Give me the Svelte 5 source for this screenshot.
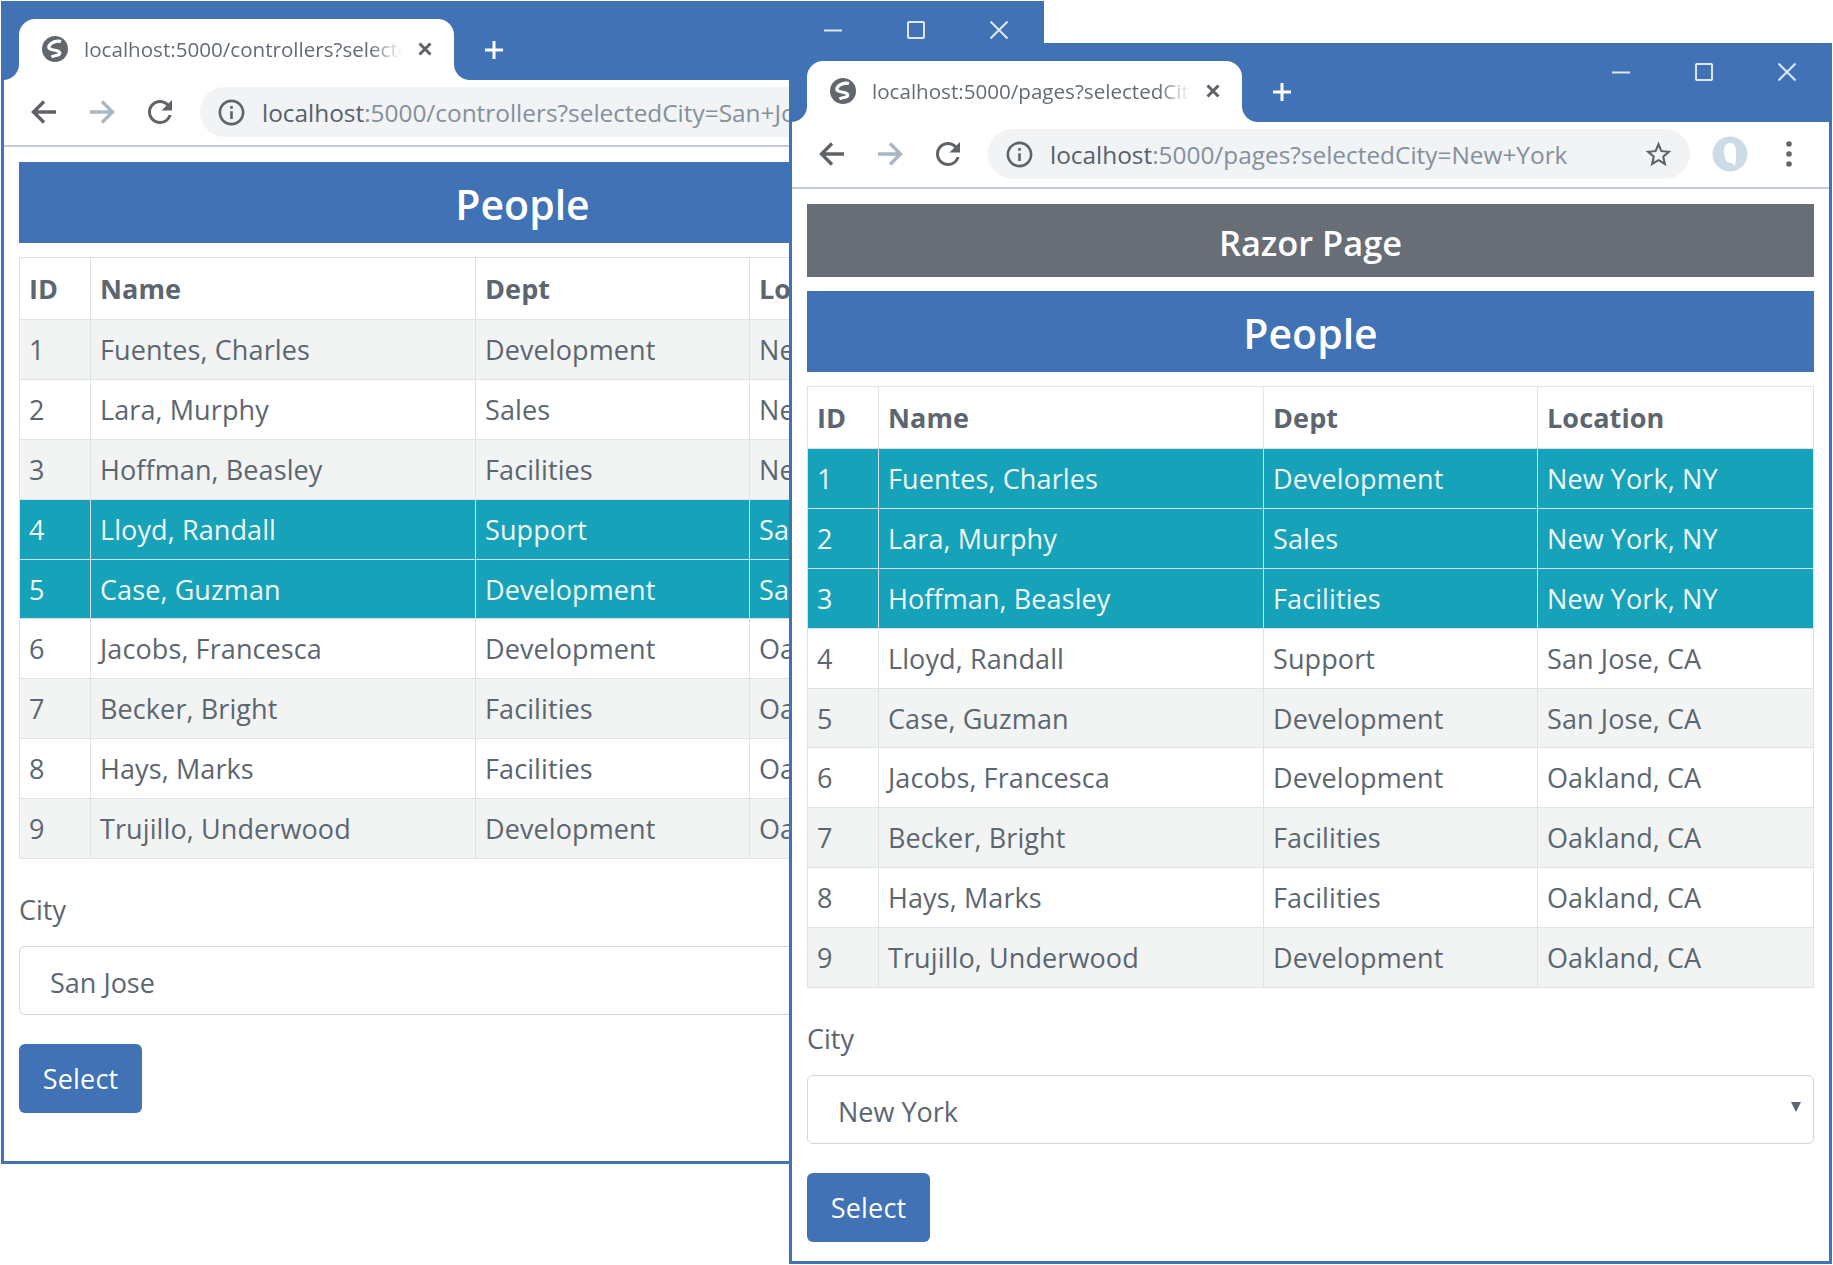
<script>
  const people = [
    [1, 'Fuentes, Charles', 'Development', 'New York, NY'],
    [2, 'Lara, Murphy', 'Sales', 'New York, NY'],
    [3, 'Hoffman, Beasley', 'Facilities', 'New York, NY'],
    [4, 'Lloyd, Randall', 'Support', 'San Jose, CA'],
    [5, 'Case, Guzman', 'Development', 'San Jose, CA'],
    [6, 'Jacobs, Francesca', 'Development', 'Oakland, CA'],
    [7, 'Becker, Bright', 'Facilities', 'Oakland, CA'],
    [8, 'Hays, Marks', 'Facilities', 'Oakland, CA'],
    [9, 'Trujillo, Underwood', 'Development', 'Oakland, CA']
  ];
  const windows = [
    { cls: 'win-a', path: 'controllers', city: 'San+Jose', label: 'San Jose', match: 'San Jose', banner: null },
    { cls: 'win-b', path: 'pages', city: 'New+York', label: 'New York', match: 'New York', banner: 'Razor Page' }
  ];
</script>

<div class="desktop">
  {#each windows as w}
    <section class="window {w.cls}">
      <header class="titlebar">
        <div class="tab">
          <svg class="globe" viewBox="0 0 26 26">
            <circle cx="13" cy="13" r="13" fill="#62676e" />
            <path d="M19 5.500C15 4.500 9 6 7 10c-1 3 3 4 7 4.500 3 .5 4.500 2 3.500 3.500-1 2-5 1-8 3" fill="none" stroke="#fff" stroke-width="3.200" />
          </svg>
          <span class="tab-title">localhost:5000/{w.path}?selectedCity={w.city}</span>
          <svg class="tab-close" viewBox="0 0 14 14"><path d="M1.500 1.500l11 11M12.500 1.500l-11 11" /></svg>
        </div>
        <svg class="newtab" viewBox="0 0 20 20"><path d="M10 1v18M1 10h18" /></svg>
        <div class="controls">
          <svg viewBox="0 0 18 18"><path d="M0 9.500h18" /></svg>
          <svg viewBox="0 0 18 18"><rect x="1" y="1" width="16" height="16" rx="1" /></svg>
          <svg viewBox="0 0 18 18"><path d="M0.500 0.500l17 17M17.500 0.500l-17 17" /></svg>
        </div>
      </header>

      <nav class="toolbar">
        <svg class="nav" viewBox="0 0 26 26"><path d="M25 13H3M13 2.500L2.500 13 13 23.500" /></svg>
        <svg class="nav fwd" viewBox="0 0 26 26"><path d="M1 13h22M13 2.500L23.500 13 13 23.500" /></svg>
        <svg class="reload" viewBox="0 0 24 24"><path d="M17.65 6.35A7.958 7.958 0 0 0 12 4c-4.42 0-7.99 3.58-7.99 8s3.57 8 7.99 8c3.73 0 6.84-2.55 7.73-6h-2.08A5.99 5.99 0 0 1 12 18c-3.31 0-6-2.69-6-6s2.69-6 6-6c1.66 0 3.14.69 4.22 1.78L13 11h7V4l-2.35 2.35z" /></svg>
        <div class="omnibox">
          <svg class="info" viewBox="0 0 24 24"><path d="M11 7h2v2h-2zm0 4h2v6h-2zm1-9C6.48 2 2 6.48 2 12s4.48 10 10 10 10-4.48 10-10S17.52 2 12 2zm0 18c-4.41 0-8-3.59-8-8s3.59-8 8-8 8 3.59 8 8-3.59 8-8 8z" /></svg>
          <span class="url"><b>localhost</b>:5000/{w.path}?selectedCity={w.city}</span>
          <svg class="star" viewBox="0 0 24 24"><path d="M22 9.240l-7.190-.62L12 2 9.190 8.630 2 9.240l5.460 4.730L5.820 21 12 17.270 18.180 21l-1.630-7.030L22 9.240zM12 15.400l-3.760 2.270 1-4.280-3.320-2.880 4.380-.38L12 6.100l1.710 4.040 4.380.38-3.320 2.880 1 4.280L12 15.400z" /></svg>
        </div>
        <svg class="avatar" viewBox="0 0 36 36">
          <circle cx="18" cy="18" r="17.500" fill="#cddbe8" />
          <path d="M18 7c-4 0-6 3-6 8 0 5 1 8 3 11l5 1 3 3c1-5 1-10 1-15 0-5-2-8-6-8z" fill="#fff" />
        </svg>
        <svg class="dots" viewBox="0 0 6 26"><circle cx="3" cy="3" r="2.800" /><circle cx="3" cy="13" r="2.800" /><circle cx="3" cy="23" r="2.800" /></svg>
      </nav>

      <main class="page">
        {#if w.banner}<div class="banner gray">{w.banner}</div>{/if}
        <div class="banner blue">People</div>
        <table>
          <colgroup><col class="c1" /><col class="c2" /><col class="c3" /><col /></colgroup>
          <thead>
            <tr><th>ID</th><th>Name</th><th>Dept</th><th>Location</th></tr>
          </thead>
          <tbody>
            {#each people as p, i}
              <tr class:hit={p[3].startsWith(w.match)} class:odd={i % 2 === 0}>
                {#each p as cell}<td>{cell}</td>{/each}
              </tr>
            {/each}
          </tbody>
        </table>
        <label class="city" for={w.cls}>City</label>
        <div class="selectwrap">
          <select id={w.cls}><option>{w.label}</option></select>
          <svg class="caret" viewBox="0 0 10 12"><path d="M0 1h10L5 11z" /></svg>
        </div>
        <button type="button">Select</button>
      </main>
    </section>
  {/each}
</div>

<style>
  :global(body) { margin: 0; background: #fff; }
  .desktop {
    position: relative;
    height: 1265px;
    overflow: hidden;
    font-family: "Open Sans", "Noto Sans", sans-serif;
    color: #5b6670;
  }
  .window {
    position: absolute;
    box-sizing: border-box;
    width: 1043px;
    background: #fff;
    border: solid #4172b6;
    border-width: 0 3px 3px 3px;
    overflow: hidden;
  }
  .win-a { left: 1px; top: 1px; height: 1163px; }
  .win-b { left: 789px; top: 43px; height: 1221px; }

  .titlebar {
    position: relative;
    display: flex;
    align-items: flex-start;
    height: 79px;
    background: #4172b6;
  }
  .tab {
    position: relative;
    box-sizing: border-box;
    display: flex;
    align-items: center;
    width: 435px;
    height: 61px;
    margin: 18px 0 0 15px;
    padding: 0 0 0 23px;
    background: #fff;
    border-radius: 16px 16px 0 0;
  }
  .tab::before, .tab::after {
    content: "";
    position: absolute;
    bottom: 0;
    width: 16px;
    height: 16px;
  }
  .tab::before { left: -16px; background: radial-gradient(circle at 0 0, #4172b6 15.5px, #fff 16.5px); }
  .tab::after { right: -16px; background: radial-gradient(circle at 100% 0, #4172b6 15.5px, #fff 16.5px); }
  .globe { width: 26px; height: 26px; flex: none; margin-top: -1px; }
  .tab-title {
    width: 318px;
    margin: -1px 0 0 16px;
    font-size: 20.6px;
    color: #646c74;
    white-space: nowrap;
    overflow: hidden;
    -webkit-mask-image: linear-gradient(to right, #000 90%, transparent 100%);
    mask-image: linear-gradient(to right, #000 90%, transparent 100%);
  }
  .tab-close { width: 14px; height: 14px; flex: none; margin: -2px 0 0 16px; fill: none; stroke: #5f6368; stroke-width: 3; }
  .newtab { width: 20px; height: 20px; margin: 39px 0 0 30px; fill: none; stroke: #fff; stroke-width: 3; }
  .controls {
    display: flex;
    gap: 65px;
    margin: 20px 0 0 auto;
    padding-right: 33px;
  }
  .controls svg { width: 18px; height: 18px; fill: none; stroke: #dfe8f2; stroke-width: 2; }

  .toolbar {
    box-sizing: border-box;
    display: flex;
    align-items: center;
    height: 67px;
    padding: 0 0 1px 27px;
    border-bottom: 2px solid #c3cad3;
  }
  .nav { width: 26px; height: 26px; flex: none; fill: none; stroke: #5f6368; stroke-width: 3.4; }
  .fwd { margin-left: 32px; stroke: #a9b6c4; }
  .reload { width: 36px; height: 36px; margin-left: 27px; flex: none; fill: #5f6368; }
  .omnibox {
    display: flex;
    align-items: center;
    box-sizing: border-box;
    width: 702px;
    height: 50px;
    margin-left: 22px;
    padding: 0 16px 0 16px;
    background: #f1f3f4;
    border-radius: 25px;
    flex: none;
  }
  .info { width: 31px; height: 31px; flex: none; fill: #5f6368; }
  .url {
    margin-left: 15px;
    font-size: 24.4px;
    color: #84909c;
    white-space: nowrap;
  }
  .url b { font-weight: 400; color: #56616c; }
  .star { width: 31px; height: 31px; flex: none; margin-left: auto; fill: #5f6368; }
  .avatar { width: 36px; height: 36px; flex: none; margin-left: 22px; }
  .dots { width: 6px; height: 26px; flex: none; margin-left: 38px; fill: #62676e; }

  .page { padding: 15px 15px 0; }
  .banner {
    display: flex;
    align-items: center;
    justify-content: center;
    box-sizing: border-box;
    padding-top: 3px;
    color: #fff;
    font-weight: 600;
  }
  .gray { height: 73px; margin-bottom: 14px; background: #686e76; font-size: 34.4px; }
  .blue { height: 81px; margin-bottom: 14px; background: #4172b6; font-size: 41px; }

  table {
    width: 1007px;
    table-layout: fixed;
    border-collapse: collapse;
    font-size: 27px;
    letter-spacing: 0.1px;
  }
  .c1 { width: 71px; }
  .c2 { width: 385px; }
  .c3 { width: 274px; }
  th, td {
    box-sizing: border-box;
    padding: 0 0 0 9px;
    border: 1.5px solid #dde3e8;
    text-align: left;
    white-space: nowrap;
    overflow: hidden;
  }
  th { height: 62px; font-weight: 700; }
  td { height: 59.9px; }
  .odd td { background: #f2f3f3; }
  .hit td { background: #16a2b8; color: #f2f8fa; border-color: #d4dfe6; }

  .city { display: block; margin-top: 33px; font-size: 27px; line-height: 36px; }
  .selectwrap { position: relative; margin-top: 18px; }
  select {
    display: block;
    box-sizing: border-box;
    width: 100%;
    height: 69px;
    padding: 4px 0 0 30px;
    font: inherit;
    font-size: 27px;
    color: #5b6670;
    background: #fff;
    border: 1.5px solid #cdd7e0;
    border-radius: 6px;
    appearance: none;
    -webkit-appearance: none;
  }
  .caret { position: absolute; right: 13px; top: 26px; width: 10px; height: 12px; fill: #5b6670; }
  button {
    display: block;
    width: 123px;
    height: 69px;
    margin-top: 29px;
    padding: 0;
    font: inherit;
    font-size: 27px;
    letter-spacing: 0.2px;
    color: #fff;
    background: #4172b6;
    border: 0;
    border-radius: 6px;
  }
</style>
